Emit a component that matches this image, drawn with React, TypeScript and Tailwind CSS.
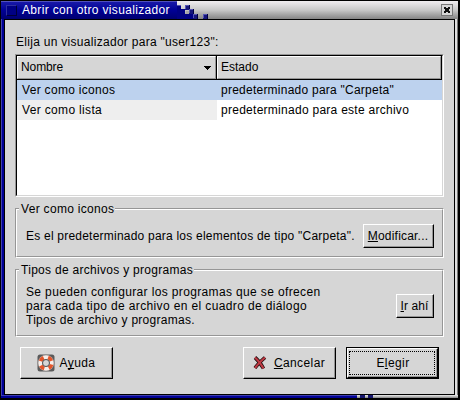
import type { ReactNode } from "react";

function Key({ children }: { children: ReactNode }) {
  return <span className="underline decoration-1 underline-offset-[1px] [text-decoration-skip-ink:none]">{children}</span>;
}

function Button({ className, children }: { className: string; children: ReactNode }) {
  return (
    <button className={`flex shrink-0 border-t border-l border-t-white border-l-white border-r border-b border-r-black border-b-black ${className}`}>
      <span className="flex h-full w-full items-center justify-center border-r border-b border-[#969696] leading-3">{children}</span>
    </button>
  );
}

function Frame({ title, className, legend, children }: { title: string; className: string; legend: string; children: ReactNode }) {
  return (
    <section className={`relative w-[429px] border border-[#969696] border-r-white border-b-white ${className}`}>
      <div className="flex h-full w-full items-center justify-between border border-white border-r-[#969696] border-b-[#969696] pr-[8px] pl-[9px]">
        {children}
      </div>
      <h2 className={`absolute -top-[7px] left-[3px] bg-[#d6d6d6] pr-px pl-[2px] leading-[14px] whitespace-nowrap ${legend}`}>{title}</h2>
    </section>
  );
}

function TitleBar() {
  return (
    <header className="flex h-[18px] w-[457px] items-center bg-linear-to-b from-[#f0eef0] via-[#c8c8c8] to-[#858585]">
      <div className="flex h-[18px] w-[176px] items-center border-t border-[#5050bd] bg-linear-to-b from-[#1818a8] via-[#000094] to-[#000070] pl-[5px]">
        <span className="h-[11px] w-[11px] border border-t-[#3030a0] border-r-[#000038] border-b-[#000038] border-l-[#3030a0] bg-[#000084]" />
        <h1 className="-mt-[2px] ml-[5px] text-white tracking-[0.34px] leading-[14px] whitespace-nowrap">Abrir con otro visualizador</h1>
      </div>
      <svg width="34" height="18" viewBox="0 0 34 18" shapeRendering="crispEdges">
        <path d="M0 4h4v4h4v5h8v5H0z" fill="#000084" />
        <path d="M8 4h5v5h-5zM12 8h5v5h-5zM16 13h5v5h-5zM26 13h5v5h-5z" fill="#16167a" />
        <path d="M0 4h4v1H0zM8 4h4v1h-3v3h-1zM12 8h4v1h-3v3h-1zM16 13h4v1h-3v3h-1zM26 13h4v1h-3v3h-1z" fill="#5656b4" />
        <path d="M12 4h1v4h-1zM16 8h1v5h-1zM20 13h1v5h-1zM30 13h1v5h-1z" fill="#000044" />
        <path d="M9 10h3v3H9z" fill="#a6a6a6" />
      </svg>
      <button className="ml-auto mr-[5px] flex h-3 w-3 items-center justify-center border border-[#777] bg-[#d6d6d6]">
        <svg width="6" height="6" viewBox="0 0 6 6" shapeRendering="crispEdges"><path d="M0 0h2v1h2V0h2v2H5v2h1v2H4V5H2v1H0V4h1V2H0z" fill="#111" /></svg>
      </button>
    </header>
  );
}

function Lifebuoy() {
  return (
    <svg width="18" height="18" viewBox="0 0 18 18">
      <rect x=".5" y=".5" width="17" height="17" rx="2.5" fill="#5a5a5a" />
      <circle cx="9" cy="9" r="8.3" fill="#8a8080" />
      <circle cx="9" cy="9" r="5.8" fill="none" stroke="#f7eee9" strokeWidth="3.8" />
      <circle cx="9" cy="9" r="5.8" fill="none" stroke="#e3562b" strokeWidth="3.8" strokeDasharray="4.555 4.555" transform="rotate(15 9 9)" />
      <circle cx="9" cy="9" r="3.5" fill="#d6d6d6" stroke="#555" strokeWidth="1" />
    </svg>
  );
}

function Cross() {
  return (
    <svg width="14" height="14" viewBox="0 0 14 14">
      <path d="M2 1.5C5 4 8 8 10.5 12.5M12 1.5C8 5 4.500 8.500 2 12" fill="none" stroke="#180808" strokeWidth="3.6" />
      <path d="M2 1.5C5 4 8 8 10.5 12.5M12 1.5C8 5 4.500 8.500 2 12" fill="none" stroke="#bd3a44" strokeWidth="2.2" />
    </svg>
  );
}

export default function App() {
  return (
    <main className="h-[400px] w-[460px] overflow-hidden bg-black pt-px pl-px font-['Liberation_Sans',Arial,sans-serif] text-[12px] text-black">
      <TitleBar />
      <div className="flex h-[376px] w-[457px]">
        <div className="w-[3px] border-l border-[#4040b0] bg-[#000094]" />
        <div className="flex h-[376px] w-[451px] flex-col border border-black bg-[#d6d6d6] pl-[10px]">
          <p className="mt-[15px] ml-px leading-[14px] tracking-[0.29px] whitespace-nowrap">Elija un visualizador para "user123":</p>
          <div className="mt-[5px] h-[143px] w-[429px] shrink-0 border border-t-[#969696] border-l-[#969696] border-r-white border-b-white">
            <div className="h-full w-full border border-t-black border-l-black border-r-[#d6d6d6] border-b-[#d6d6d6] bg-white">
              <div className="flex h-6 border-b border-black bg-[#d6d6d6] leading-[21px]">
                <div className="flex w-[200px] items-center justify-between border-r border-black">
                  <div className="flex h-full w-full items-center justify-between border border-white border-r-[#969696] border-b-[#969696] pr-[4px] pl-[3px]">
                    <span className="tracking-[-0.1px]">Nombre</span>
                    <svg width="7" height="4" viewBox="0 0 7 4" shapeRendering="crispEdges"><path d="M0 0h7v1H6v1H5v1H4v1H3V3H2V2H1V1H0z" /></svg>
                  </div>
                </div>
                <div className="flex w-[225px] items-center border-r border-black">
                  <div className="flex h-full w-full items-center border border-white border-r-[#969696] border-b-[#969696] pl-[3px] tracking-[0px]">Estado</div>
                </div>
              </div>
              <div className="flex h-5 items-center bg-[#bdd2ee] leading-5 tracking-[0.31px] whitespace-nowrap">
                <span className="w-[200px] pl-[5px]">Ver como iconos</span>
                <span className="pl-[4px] tracking-[0.24px]">predeterminado para "Carpeta"</span>
              </div>
              <div className="flex h-5 items-center leading-5 tracking-[0.34px] whitespace-nowrap">
                <span className="w-[200px] bg-[#eee] pl-[5px]">Ver como lista</span>
                <span className="pl-[4px] tracking-[0.27px]">predeterminado para este archivo</span>
              </div>
            </div>
          </div>
          <Frame title="Ver como iconos" legend="tracking-[0.31px]" className="mt-[11px] h-[50px] shrink-0">
            <p className="mt-[6px] whitespace-nowrap tracking-[0.22px]">Es el predeterminado para los elementos de tipo "Carpeta".</p>
            <Button className="mt-[6px] h-6 w-[71px] tracking-[0.2px]"><span><Key>M</Key>odificar...</span></Button>
          </Frame>
          <Frame title="Tipos de archivos y programas" legend="tracking-[0.29px]" className="mt-[11px] h-[68px] shrink-0">
            <p className="mt-[6px] leading-[14px] tracking-[0.36px]">Se pueden configurar los programas que se ofrecen<br /><span className="tracking-[0.37px]">para cada tipo de archivo en el cuadro de diálogo</span><br /><span className="tracking-[0.27px]">Tipos de archivo y programas.</span></p>
            <Button className="mt-[6px] h-6 w-[38px] tracking-[0.1px]"><span><Key>I</Key>r ahí</span></Button>
          </Frame>
          <div className="mt-[10px] ml-[5px] flex tracking-[0.4px]">
            <Button className="h-8 w-[93px]"><Lifebuoy /><span className="ml-[5px]">A<Key>y</Key>uda</span></Button>
            <Button className="ml-[130px] h-8 w-[93px]"><Cross /><span className="ml-[7px]"><Key>C</Key>ancelar</span></Button>
            <div className="ml-[10px] h-8 w-[93px] border border-black">
              <Button className="h-[30px] w-[91px]">
                <span className="flex h-6 w-[86px] items-center justify-center border border-dotted border-black"><span className="pl-[2px]">E<Key>l</Key>egir</span></span>
              </Button>
            </div>
          </div>
        </div>
        <div className="w-[3px] border-r border-[#777] bg-[#e0e0e0]" />
      </div>
      <div className="flex h-[3px] w-[457px] bg-linear-to-b from-[#eee] to-[#888]">
        <div className="w-[356px] border-t border-[#4040b0] bg-[#000094]" />
        <div className="ml-[3px] w-[5px] bg-[#16166d]" />
        <div className="ml-[3px] w-[5px] bg-[#16166d]" />
      </div>
    </main>
  );
}
